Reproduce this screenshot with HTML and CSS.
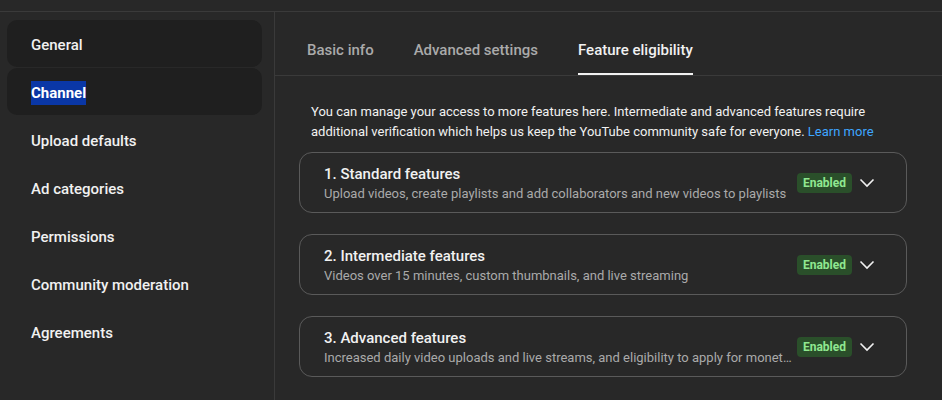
FILE: index.html
```html
<!DOCTYPE html>
<html>
<head>
<meta charset="utf-8">
<link rel="stylesheet" href="styles.css">
</head>
<body>
<div class="page">
  <aside class="sidebar">
    <div class="nav-item boxed">General</div>
    <div class="nav-item boxed"><span class="selected">Channel</span></div>
    <div class="nav-item">Upload defaults</div>
    <div class="nav-item">Ad categories</div>
    <div class="nav-item">Permissions</div>
    <div class="nav-item">Community moderation</div>
    <div class="nav-item">Agreements</div>
  </aside>
  <main class="main">
    <nav class="tabs">
      <div class="tab">Basic info</div>
      <div class="tab">Advanced settings</div>
      <div class="tab active">Feature eligibility</div>
    </nav>
    <section class="content">
      <p class="intro">You can manage your access to more features here. Intermediate and advanced features require additional verification which helps us keep the YouTube community safe for everyone. <a class="link">Learn more</a></p>
      <div class="cards">
        <div class="card">
          <div class="card-text">
            <div class="card-title">1. Standard features</div>
            <div class="card-sub">Upload videos, create playlists and add collaborators and new videos to playlists</div>
          </div>
          <span class="badge">Enabled</span>
          <svg class="chev" width="16" height="10" viewBox="0 0 16 10"><polyline points="1.5,1.5 8,8 14.5,1.5" fill="none" stroke="#f1f1f1" stroke-width="1.6"/></svg>
        </div>
        <div class="card">
          <div class="card-text">
            <div class="card-title">2. Intermediate features</div>
            <div class="card-sub">Videos over 15 minutes, custom thumbnails, and live streaming</div>
          </div>
          <span class="badge">Enabled</span>
          <svg class="chev" width="16" height="10" viewBox="0 0 16 10"><polyline points="1.5,1.5 8,8 14.5,1.5" fill="none" stroke="#f1f1f1" stroke-width="1.6"/></svg>
        </div>
        <div class="card">
          <div class="card-text">
            <div class="card-title">3. Advanced features</div>
            <div class="card-sub">Increased daily video uploads and live streams, and eligibility to apply for monetization</div>
          </div>
          <span class="badge">Enabled</span>
          <svg class="chev" width="16" height="10" viewBox="0 0 16 10"><polyline points="1.5,1.5 8,8 14.5,1.5" fill="none" stroke="#f1f1f1" stroke-width="1.6"/></svg>
        </div>
      </div>
    </section>
  </main>
</div>
</body>
</html>
```

FILE: styles.css
```css
* { box-sizing: border-box; }
html, body { margin: 0; padding: 0; background: #282828; }
body {
  font-family: Roboto, "Liberation Sans", sans-serif;
  color: #f1f1f1;
  padding-top: 11px;
  height: 400px;
  overflow: hidden;
}
.page {
  display: flex;
  border-top: 1px solid #3a3a3a;
  height: 389px;
}
.sidebar {
  width: 275px;
  flex: none;
  border-right: 1px solid #3a3a3a;
  padding: 8px 12px 0 7px;
  display: flex;
  flex-direction: column;
  gap: 1px;
}
.nav-item {
  height: 47px;
  display: flex;
  align-items: center;
  padding-left: 24px;
  padding-top: 2px;
  font-size: 15px;
  font-weight: 500;
  color: #f1f1f1;
}
.nav-item.boxed {
  background: #1f1f1f;
  border-radius: 10px;
}
.selected {
  background: #0a37a6;
  color: #fff;
  line-height: 24px;
  font-weight: 700;
}
.main {
  flex: 1;
  min-width: 0;
}
.tabs {
  display: flex;
  gap: 40px;
  height: 64px;
  padding-left: 32px;
  border-bottom: 1px solid #3a3a3a;
}
.tab {
  display: flex;
  align-items: center;
  font-size: 15px;
  font-weight: 500;
  color: #aaaaaa;
  border-bottom: 2px solid transparent;
  padding-top: 15px;
}
.tab.active {
  color: #f1f1f1;
  border-bottom-color: #f1f1f1;
}
.content {
  padding: 26px 35px 0 24px;
}
.intro {
  margin: 0 0 10px 12px;
  font-size: 13px;
  line-height: 20px;
  color: #f1f1f1;
}
.link { color: #3ea6ff; text-decoration: none; }
.cards {
  display: flex;
  flex-direction: column;
  gap: 21px;
}
.card {
  height: 61px;
  border: 1px solid #5a5a5a;
  border-radius: 13px;
  display: flex;
  align-items: center;
  padding: 0 31px 0 24px;
}
.card-text {
  flex: 1;
  min-width: 0;
  padding-right: 3px;
  padding-top: 2px;
}
.card-title {
  font-size: 15px;
  font-weight: 500;
  line-height: 20px;
  color: #f1f1f1;
}
.card-sub {
  font-size: 13px;
  line-height: 20px;
  color: #aaaaaa;
  white-space: nowrap;
  overflow: hidden;
  text-overflow: ellipsis;
}
.badge {
  flex: none;
  background: #2a4f2a;
  color: #90e890;
  font-size: 12px;
  font-weight: 700;
  line-height: 20px;
  padding: 0 6px;
  border-radius: 4px;
  margin-top: 1px;
}
.chev {
  flex: none;
  margin-left: 7px;
}
```
